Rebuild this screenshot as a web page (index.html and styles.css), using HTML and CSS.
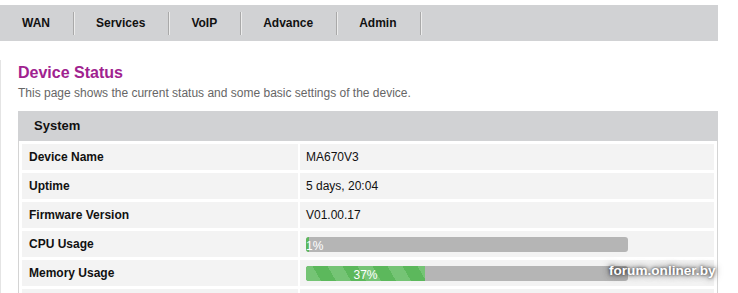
FILE: index.html
```html
<!DOCTYPE html>
<html lang="en">
<head>
<meta charset="utf-8">
<title>Device Status</title>
<link rel="stylesheet" href="styles.css">
</head>
<body>
<nav class="topnav">
  <a class="tab">WAN</a>
  <a class="tab">Services</a>
  <a class="tab">VoIP</a>
  <a class="tab">Advance</a>
  <a class="tab">Admin</a>
</nav>
<main class="content">
  <h1 class="title">Device Status</h1>
  <p class="desc">This page shows the current status and some basic settings of the device.</p>
  <section class="panel">
    <div class="panel-head">System</div>
    <div class="panel-body">
      <div class="cell label">Device Name</div><div class="cell value">MA670V3</div>
      <div class="cell label">Uptime</div><div class="cell value">5 days, 20:04</div>
      <div class="cell label">Firmware Version</div><div class="cell value">V01.00.17</div>
      <div class="cell label">CPU Usage</div>
      <div class="cell value"><div class="progress"><div class="bar" style="width:1%">1%</div></div></div>
      <div class="cell label">Memory Usage</div>
      <div class="cell value"><div class="progress"><div class="bar striped" style="width:37%">37%</div></div></div>
      <div class="cell label">&nbsp;</div><div class="cell value">&nbsp;</div>
    </div>
  </section>
</main>
<div class="watermark">forum.onliner.by</div>
</body>
</html>
```
FILE: styles.css
```css
html, body {
  margin: 0;
  padding: 0;
  background: #fff;
  font-family: "Liberation Sans", Arial, sans-serif;
  font-size: 12px;
  color: #111;
}
body {
  position: relative;
  width: 738px;
  height: 293px;
  overflow: hidden;
}
.topnav {
  display: flex;
  margin-top: 5px;
  width: 718px;
  height: 36px;
  background: #d1d2d4;
}
.tab {
  display: flex;
  align-items: center;
  font-weight: bold;
  font-size: 12px;
  color: #111;
  line-height: 36px;
}
.tab::before {
  content: "";
  width: 22px;
}
.tab::after {
  content: "";
  display: block;
  width: 1px;
  height: 23px;
  margin-left: 23px;
  background: #a9a9a9;
  box-shadow: 1px 0 0 #ececec;
}
.content {
  margin: 19px 0 0 0;
  border-left: 1px solid #e4e4e4;
  padding: 3px 0 0 17px;
  height: 300px;
}
.title {
  margin: 0;
  font-size: 16px;
  line-height: 20px;
  font-weight: bold;
  color: #a0228f;
}
.desc {
  margin: 2px 0 0 0;
  font-size: 12px;
  line-height: 16px;
  color: #666;
}
.panel {
  margin-top: 10px;
  width: 700px;
}
.panel-head {
  height: 30px;
  line-height: 30px;
  background: #d1d2d4;
  padding-left: 16px;
  font-weight: bold;
  font-size: 13px;
  color: #111;
}
.panel-body {
  display: grid;
  grid-template-columns: 276px 414px;
  column-gap: 2px;
  row-gap: 3px;
  padding: 3px;
  border-left: 1px solid #d4d4d4;
  border-right: 1px solid #d4d4d4;
}
.cell {
  background: #f3f3f3;
  height: 26px;
  line-height: 26px;
  display: flex;
  align-items: center;
}
.label {
  padding-left: 7px;
  font-weight: bold;
}
.value {
  padding: 0 6px;
}
.progress {
  width: 80%;
  height: 15px;
  background: #b5b5b5;
  border-radius: 3px;
  overflow: hidden;
}
.bar {
  height: 12px;
  padding-top: 3px;
  background: #5cb85c;
  color: #fff;
  font-size: 12px;
  line-height: 12px;
  text-align: center;
  white-space: nowrap;
}
.striped {
  background-color: #5cb85c;
  background-image: repeating-linear-gradient(60deg, #75c475 0, #75c475 13px, #5cb85c 13px, #5cb85c 26px);
}
.watermark {
  position: absolute;
  left: 609px;
  top: 262px;
  font-weight: bold;
  font-size: 13.6px;
  line-height: 18px;
  color: #fff;
  text-shadow: 0 0 3px rgba(0,0,0,0.7), 0 0 6px rgba(0,0,0,0.5), 0 0 10px rgba(0,0,0,0.35);
}
```
